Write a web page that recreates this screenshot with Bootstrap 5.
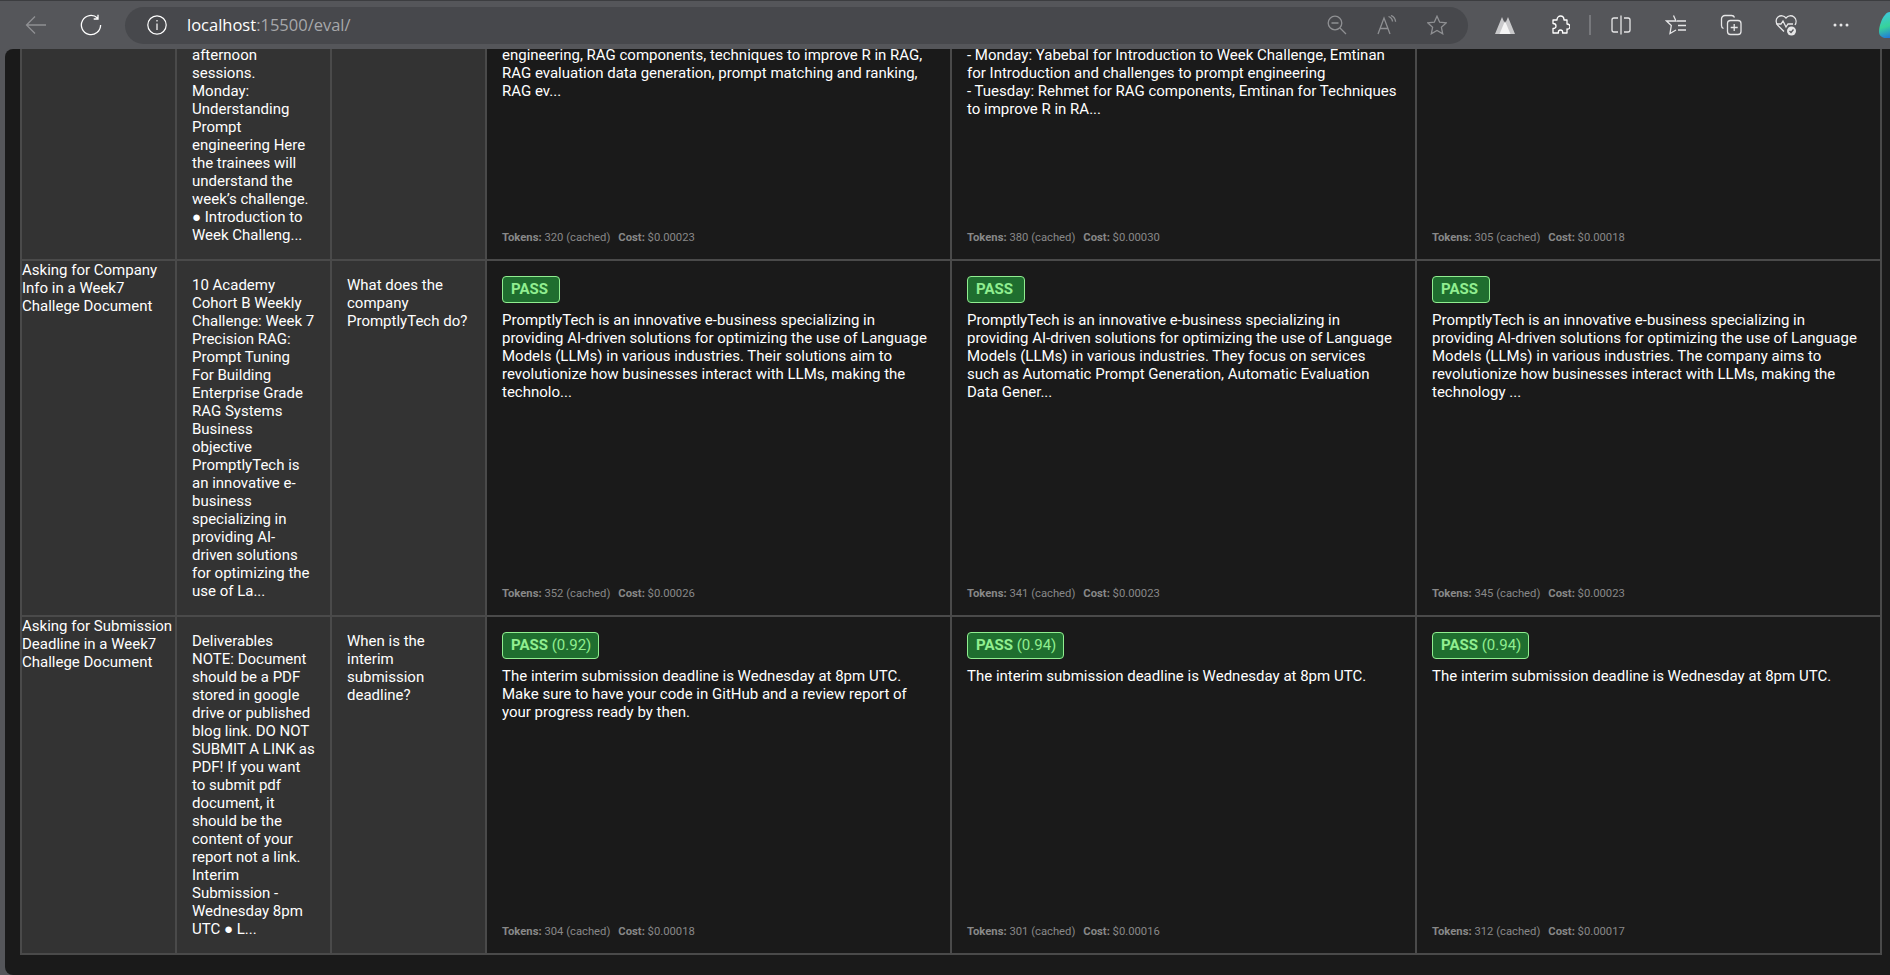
<!DOCTYPE html>
<html lang="en">
<head>
    <meta charset="UTF-8">
    <meta name="viewport" content="width=device-width, initial-scale=1.0">
    <title>Eval results</title>
    <link href="https://cdn.jsdelivr.net/npm/bootstrap@5.3.2/dist/css/bootstrap.min.css" rel="stylesheet">
    <script src="https://cdn.jsdelivr.net/npm/bootstrap@5.3.2/dist/js/bootstrap.bundle.min.js"></script>
    <style>
        html, body {
            height: 100%;
            overflow: hidden;
            background-color: #55565a;
        }
        .browser-bar {
            height: 49px;
            border-top: 1px solid #3c3d40;
            overflow: hidden;
            padding-left: 8px;
        }
        .tb-btn {
            flex: 0 0 55px;
            height: 48px;
        }
        .tb-btn svg, .addr-icon svg { display: block; }
        .addr-bar {
            flex: 0 0 1343px;
            height: 37px;
            margin: 0 9px 0 7px;
            padding: 0 21px 0 22px;
            background-color: #47484c;
            border-radius: 19px;
            font-family: "Open Sans", sans-serif;
            font-size: 16.5px;
            color: #fff;
        }
        .addr-text { margin-left: 20px; }
        .addr-text span { color: #a6a7aa; }
        .addr-icon { margin-left: 30px; }
        .bar-sep {
            flex: 0 0 2px;
            height: 20px;
            margin: 0 2px;
            background-color: #77787c;
        }
        .page-view {
            height: 926px;
            margin-left: 5px;
            padding: 0 9px 0 15px;
            overflow: hidden;
            background-color: #1a1a1a;
            border-radius: 8px 0 0 8px;
        }
        .eval-tbl {
            --bs-table-color: #fff;
            --bs-table-bg: #1a1a1a;
            width: 1861px;
            margin-top: -3px;
            table-layout: fixed;
            font-family: Roboto, sans-serif;
            font-size: 15px;
            line-height: 18px;
        }
        .eval-tbl td {
            height: 1px;
            padding: 15px;
            border: 2px solid #4a4a4a;
            vertical-align: top;
        }
        .eval-tbl td.var-cell { background-color: #333; }
        .eval-tbl td.desc-cell { padding: 0; background-color: #333; }
        .eval-tbl tr:first-child td { padding-top: 0; border-top: 0; }
        .col-var { width: 155px; }
        .col-out { width: 465px; }
        .out-wrap { height: 100%; }
        .out-txt { white-space: pre-line; }
        .pass-tag {
            align-self: flex-start;
            height: 27px;
            margin-bottom: 8px;
            padding: 0 7px 0 8px;
            line-height: 25px;
            color: #90ee90;
            background-color: #1f6e2f;
            border: 1px solid #90ee90;
            border-radius: 4px;
        }
        .out-meta {
            margin-top: auto;
            margin-bottom: -1px;
            font-size: 11.25px;
            line-height: 14px;
            color: #888;
        }
        .out-meta span { margin-right: 8px; }
    </style>
</head>
<body>

    <!-- browser toolbar -->
    <div class="browser-bar d-flex align-items-center">
        <div class="tb-btn d-flex align-items-center justify-content-center">
            <svg width="22" height="22" viewBox="0 0 22 22" fill="none" stroke="#8f9093" stroke-width="1.3"><path d="M21 11H1.5M10 2.5 1.5 11l8.500 8.500"/></svg>
        </div>
        <div class="tb-btn d-flex align-items-center justify-content-center">
            <svg width="22" height="22" viewBox="0 0 22 22" fill="none" stroke="#fff" stroke-width="1.3"><path d="M17.500 4A9.600 9.600 0 1 0 20.600 11M18 .8V5h-4.300"/></svg>
        </div>
        <div class="addr-bar d-flex align-items-center">
            <svg width="20" height="20" viewBox="0 0 20 20" fill="none" stroke="#fff" stroke-width="1.200"><circle cx="10" cy="10" r="9.200"/><path d="M10 8.500V15M10 5v1.600"/></svg>
            <div class="addr-text">localhost<span>:15500/eval/</span></div>
            <div class="addr-icon ms-auto">
                <svg width="20" height="20" viewBox="0 0 20 20" fill="none" stroke="#8f9093" stroke-width="1.300"><circle cx="8" cy="8" r="6.800"/><path d="M4.500 8h7M13 13l6 6"/></svg>
            </div>
            <div class="addr-icon">
                <svg width="20" height="20" viewBox="0 0 20 20" fill="none" stroke="#8f9093" stroke-width="1.300"><path d="M1 19 7 3l6 16M3.200 13.500h7.600M11.500 1.500c2.500.8 3.800 2.500 4 5M14 .5c2.500 1 4.300 3.300 4.600 6.200"/></svg>
            </div>
            <div class="addr-icon">
                <svg width="20" height="20" viewBox="0 0 20 20" fill="none" stroke="#8f9093" stroke-width="1.300"><path d="M10 1.200 12.700 7.200l6.500.7-4.800 4.400 1.300 6.500L10 15.500l-5.700 3.300 1.300-6.500L.8 7.900l6.500-.7z"/></svg>
            </div>
        </div>
        <div class="tb-btn d-flex align-items-center justify-content-center">
            <svg width="20" height="18" viewBox="0 0 20 18"><path d="M0 18 7 1l3 7 3-7 7 17z" fill="#c9c9cb"/><path d="M4.500 18 10 5l5.500 13z" fill="#f4f4f4"/></svg>
        </div>
        <div class="tb-btn d-flex align-items-center justify-content-center">
            <svg width="20" height="20" viewBox="0 0 20 20" fill="none" stroke="#fff" stroke-width="1.300" stroke-linejoin="round"><path d="M3 5h4C7 2 9 1 10.500 1S14 2 14 5h3v4c2.500 0 3 1.500 3 2.500S19 14.500 17 14v4h-4.500c.5-2-.5-3-2-3S8 16 8.500 18H3v-4.500c2.500 0 3-1.500 3-2.500S5 8.500 3 8.500z"/></svg>
        </div>
        <div class="bar-sep"></div>
        <div class="tb-btn d-flex align-items-center justify-content-center">
            <svg width="20" height="20" viewBox="0 0 20 20" fill="none" stroke="#e6e6e7" stroke-width="1.300"><path d="M7 3H3a2 2 0 0 0-2 2v10a2 2 0 0 0 2 2h4M13 3h4a2 2 0 0 1 2 2v10a2 2 0 0 1-2 2h-4M10 .5v19"/></svg>
        </div>
        <div class="tb-btn d-flex align-items-center justify-content-center">
            <svg width="22" height="22" viewBox="0 0 22 22" fill="none" stroke="#e6e6e7" stroke-width="1.300"><path d="M8.500 1.500 11 7H1.500l4.800 4.500L5 19.500l6-3.500M12 7h9M13 11.500h8M13 16h8"/></svg>
        </div>
        <div class="tb-btn d-flex align-items-center justify-content-center">
            <svg width="22" height="22" viewBox="0 0 22 22" fill="none" stroke="#e6e6e7" stroke-width="1.300"><path d="M14.500 3.500C14 2 13 1.500 11.500 1.500H5A3.500 3.500 0 0 0 1.500 5v6.500c0 1.500.5 2.500 2 3"/><rect x="7.500" y="6.500" width="13.500" height="14" rx="3"/><path d="M14.200 10v7M10.700 13.500h7"/></svg>
        </div>
        <div class="tb-btn d-flex align-items-center justify-content-center">
            <svg width="22" height="22" viewBox="0 0 22 22" fill="none" stroke="#e6e6e7" stroke-width="1.300"><path d="M9 17.500 3 11.500C.5 9 .5 5 3 3s6-1.500 8 1c2-2.500 5.500-3 8-1s2.500 5.500 1 8"/><path d="M1.500 10H6l2-3 3 6 2-3h5"/><circle cx="16.500" cy="17" r="4.500" fill="#e6e6e7" stroke="none"/><path d="M14.500 17l1.500 1.500 2.500-3" stroke="#55565a"/></svg>
        </div>
        <div class="tb-btn d-flex align-items-center justify-content-center">
            <svg width="16" height="4" viewBox="0 0 16 4" fill="#e6e6e7"><circle cx="2" cy="2" r="1.500"/><circle cx="8" cy="2" r="1.500"/><circle cx="14" cy="2" r="1.500"/></svg>
        </div>
        <div class="tb-btn d-flex align-items-center justify-content-center">
            <svg width="34" height="26" viewBox="0 0 34 26">
                <defs><linearGradient id="copilotFill" x1="0" y1="0" x2=".4" y2="1"><stop offset="0" stop-color="#3fc6e8"/><stop offset=".55" stop-color="#37d39a"/><stop offset="1" stop-color="#1f6fe0"/></linearGradient></defs>
                <path d="M0 20C0 14 3 6 6 3c1-2 3-3 5-3h16c3 0 5 2 6 5v21H7c-3 0-7-2-7-6z" fill="url(#copilotFill)"/>
            </svg>
        </div>
    </div>

    <div class="page-view">
        <table class="table eval-tbl mb-0">
            <colgroup>
                <col class="col-var"><col class="col-var"><col class="col-var">
                <col class="col-out"><col class="col-out"><col class="col-out">
            </colgroup>
            <tbody>
                <tr>
                    <td class="desc-cell"></td>
                    <td class="var-cell">afternoon sessions. Monday: Understanding Prompt engineering Here the trainees will understand the week’s challenge. ● Introduction to Week Challeng...</td>
                    <td class="var-cell"></td>
                    <td>
                        <div class="out-wrap d-flex flex-column">
                            <div class="out-txt">engineering, RAG components, techniques to improve R in RAG, RAG evaluation data generation, prompt matching and ranking, RAG ev...</div>
                            <div class="out-meta"><span><b>Tokens:</b> 320 (cached)</span><span><b>Cost:</b> $0.00023</span></div>
                        </div>
                    </td>
                    <td>
                        <div class="out-wrap d-flex flex-column">
                            <div class="out-txt">- Monday: Yabebal for Introduction to Week Challenge, Emtinan for Introduction and challenges to prompt engineering
- Tuesday: Rehmet for RAG components, Emtinan for Techniques to improve R in RA...</div>
                            <div class="out-meta"><span><b>Tokens:</b> 380 (cached)</span><span><b>Cost:</b> $0.00030</span></div>
                        </div>
                    </td>
                    <td>
                        <div class="out-wrap d-flex flex-column">
                            <div class="out-meta"><span><b>Tokens:</b> 305 (cached)</span><span><b>Cost:</b> $0.00018</span></div>
                        </div>
                    </td>
                </tr>
                <tr>
                    <td class="desc-cell">Asking for Company Info in a Week7 Challege Document</td>
                    <td class="var-cell">10 Academy Cohort B Weekly Challenge: Week 7 Precision RAG: Prompt Tuning For Building Enterprise Grade RAG Systems Business objective PromptlyTech is an innovative e-business specializing in providing AI-driven solutions for optimizing the use of La...</td>
                    <td class="var-cell">What does the company PromptlyTech do?</td>
                    <td>
                        <div class="out-wrap d-flex flex-column">
                            <div class="pass-tag"><b>PASS</b>&nbsp;</div>
                            <div class="out-txt">PromptlyTech is an innovative e-business specializing in providing AI-driven solutions for optimizing the use of Language Models (LLMs) in various industries. Their solutions aim to revolutionize how businesses interact with LLMs, making the technolo...</div>
                            <div class="out-meta"><span><b>Tokens:</b> 352 (cached)</span><span><b>Cost:</b> $0.00026</span></div>
                        </div>
                    </td>
                    <td>
                        <div class="out-wrap d-flex flex-column">
                            <div class="pass-tag"><b>PASS</b>&nbsp;</div>
                            <div class="out-txt">PromptlyTech is an innovative e-business specializing in providing AI-driven solutions for optimizing the use of Language Models (LLMs) in various industries. They focus on services such as Automatic Prompt Generation, Automatic Evaluation Data Gener...</div>
                            <div class="out-meta"><span><b>Tokens:</b> 341 (cached)</span><span><b>Cost:</b> $0.00023</span></div>
                        </div>
                    </td>
                    <td>
                        <div class="out-wrap d-flex flex-column">
                            <div class="pass-tag"><b>PASS</b>&nbsp;</div>
                            <div class="out-txt">PromptlyTech is an innovative e-business specializing in providing AI-driven solutions for optimizing the use of Language Models (LLMs) in various industries. The company aims to revolutionize how businesses interact with LLMs, making the technology ...</div>
                            <div class="out-meta"><span><b>Tokens:</b> 345 (cached)</span><span><b>Cost:</b> $0.00023</span></div>
                        </div>
                    </td>
                </tr>
                <tr>
                    <td class="desc-cell">Asking for Submission Deadline in a Week7 Challege Document</td>
                    <td class="var-cell">Deliverables NOTE: Document should be a PDF stored in google drive or published blog link. DO NOT SUBMIT A LINK as PDF! If you want to submit pdf document, it should be the content of your report not a link. Interim Submission - Wednesday 8pm UTC ● L...</td>
                    <td class="var-cell">When is the interim submission deadline?</td>
                    <td>
                        <div class="out-wrap d-flex flex-column">
                            <div class="pass-tag"><b>PASS</b> (0.92)</div>
                            <div class="out-txt">The interim submission deadline is Wednesday at 8pm UTC. Make sure to have your code in GitHub and a review report of your progress ready by then.</div>
                            <div class="out-meta"><span><b>Tokens:</b> 304 (cached)</span><span><b>Cost:</b> $0.00018</span></div>
                        </div>
                    </td>
                    <td>
                        <div class="out-wrap d-flex flex-column">
                            <div class="pass-tag"><b>PASS</b> (0.94)</div>
                            <div class="out-txt">The interim submission deadline is Wednesday at 8pm UTC.</div>
                            <div class="out-meta"><span><b>Tokens:</b> 301 (cached)</span><span><b>Cost:</b> $0.00016</span></div>
                        </div>
                    </td>
                    <td>
                        <div class="out-wrap d-flex flex-column">
                            <div class="pass-tag"><b>PASS</b> (0.94)</div>
                            <div class="out-txt">The interim submission deadline is Wednesday at 8pm UTC.</div>
                            <div class="out-meta"><span><b>Tokens:</b> 312 (cached)</span><span><b>Cost:</b> $0.00017</span></div>
                        </div>
                    </td>
                </tr>
            </tbody>
        </table>
    </div>

</body>
</html>
